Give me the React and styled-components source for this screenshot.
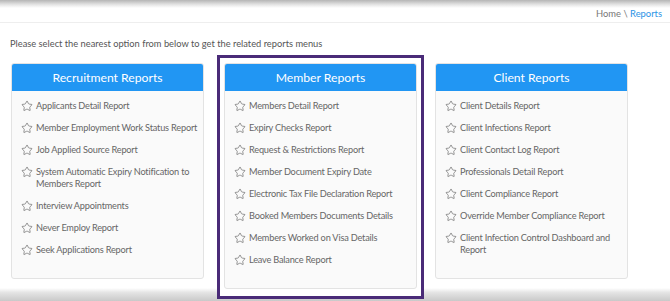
import React from 'react';
import styled, { createGlobalStyle } from 'styled-components';
import { Star } from 'lucide-react';

const GlobalStyle = createGlobalStyle`
  body {
    margin: 0;
    background: #fff;
    font-family: Lato, 'Open Sans', sans-serif;
  }
`;

const TopShade = styled.div`
  height: 8px;
  background: linear-gradient(to bottom, #b5b5b5 0%, #e6e6e6 60%, #fff 100%);
`;

const Breadcrumb = styled.div`
  height: 14px;
  padding-right: 8px;
  border-bottom: 1px solid #eeeeee;
  text-align: right;
  font-size: 9.4px;
  line-height: 11px;
  color: #777;

  & span {
    color: #2a93e6;
  }
`;

const Intro = styled.p`
  margin: 15px 0 0 10px;
  font-size: 9.3px;
  line-height: 12px;
  color: #555;
`;

const Row = styled.div`
  display: flex;
  align-items: flex-start;
  padding-left: 11px;
  margin-top: 5px;
`;

const Highlight = styled.div`
  position: relative;
  z-index: 2;
  border: 3px solid #4a2b78;
  padding: 4.5px 4px 7px;
  margin: 0 11px 0 13px;
  background: #fff;
`;

const Panel = styled.div`
  width: 193px;
  margin-top: ${(p) => (p.$inset ? 0 : 7.5)}px;
  background: #fafafa;
  border: 1px solid #e3e3e3;
  border-radius: 3px;
  box-sizing: border-box;
  overflow: hidden;
`;

const Header = styled.div`
  height: 27px;
  background: #2196f3;
  color: #fff;
  font-size: 12.2px;
  line-height: 27px;
  text-align: center;
`;

const List = styled.ul`
  list-style: none;
  margin: 0;
  padding: 9px 2px 22px 9px;
  display: flex;
  flex-direction: column;
  gap: 10px;
`;

const Item = styled.li`
  display: flex;
  align-items: flex-start;
  gap: 3px;
  font-size: 9.2px;
  letter-spacing: -0.2px;
  line-height: 12px;
  color: #666;

  & svg {
    flex: none;
  }
`;

const BottomShade = styled.div`
  position: fixed;
  left: 0;
  right: 0;
  bottom: 0;
  height: 13px;
  z-index: 1;
  background: linear-gradient(to bottom, #fff 0%, #e4e4e4 35%, #c9c9c9 100%);
`;

const recruitment = [
  'Applicants Detail Report',
  'Member Employment Work Status Report',
  'Job Applied Source Report',
  'System Automatic Expiry Notification to Members Report',
  'Interview Appointments',
  'Never Employ Report',
  'Seek Applications Report',
];

const member = [
  'Members Detail Report',
  'Expiry Checks Report',
  'Request & Restrictions Report',
  'Member Document Expiry Date',
  'Electronic Tax File Declaration Report',
  'Booked Members Documents Details',
  'Members Worked on Visa Details',
  'Leave Balance Report',
];

const client = [
  'Client Details Report',
  'Client Infections Report',
  'Client Contact Log Report',
  'Professionals Detail Report',
  'Client Compliance Report',
  'Override Member Compliance Report',
  'Client Infection Control Dashboard and Report',
];

const ReportPanel = ({ title, items, inset }) => (
  <Panel $inset={inset}>
    <Header>{title}</Header>
    <List>
      {items.map((item) => (
        <Item key={item}>
          <Star size={12} strokeWidth={1.4} color="#6a6a6a" />
          <span>{item}</span>
        </Item>
      ))}
    </List>
  </Panel>
);

const App = () => (
  <React.Fragment>
    <GlobalStyle />
    <TopShade />
    <Breadcrumb>
      Home \ <span>Reports</span>
    </Breadcrumb>
    <Intro>
      Please select the nearest option from below to get the related reports
      menus
    </Intro>
    <Row>
      <ReportPanel title="Recruitment Reports" items={recruitment} />
      <Highlight>
        <ReportPanel title="Member Reports" items={member} inset />
      </Highlight>
      <ReportPanel title="Client Reports" items={client} />
    </Row>
    <BottomShade />
  </React.Fragment>
);

export default App;
